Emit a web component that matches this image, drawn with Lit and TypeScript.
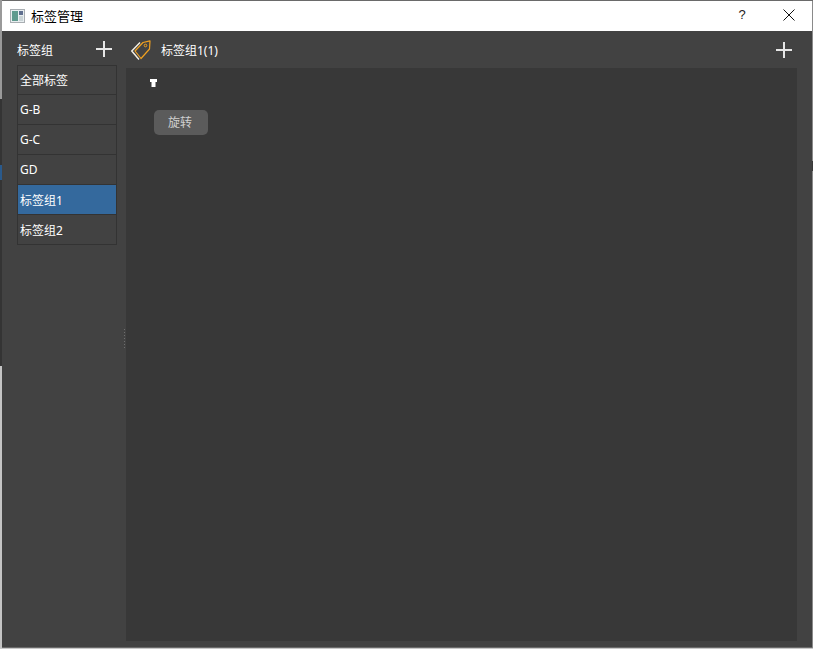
import { LitElement, html, css, svg } from "lit";
import { customElement } from "lit/decorators.js";

const plus = svg`<svg class="plus" width="16" height="16" viewBox="0 0 16 16"><path d="M8 0V16M0 8H16" stroke="#e6e6e6" stroke-width="2" fill="none"/></svg>`;

@customElement("app-root")
export class AppRoot extends LitElement {
  static styles = css`
    :host { display: block; width: 813px; height: 649px; overflow: hidden; box-sizing: border-box;
      background: #c8c8c8; font-family: "Noto Sans", "Noto Sans CJK SC", "Liberation Sans", sans-serif; }
    .frame { box-sizing: border-box; width: 813px; height: 648px; display: flex; background: #6a6a6a; padding-top: 1px; }
    .edge-l { width: 2px; flex: none; margin-top: -1px;
      background: linear-gradient(#9a9a9a 0 99px, #343434 99px 165px, #2a5a8c 165px 180px, #343434 180px 366px, #c4c4c4 366px); }
    .edge-r { width: 1px; flex: none; background: linear-gradient(#8a8a8a 0 160px, #3a3a3a 160px 170px, #8a8a8a 170px); }
    .win { flex: 1; min-width: 0; display: flex; flex-direction: column; padding-bottom: 1px; }
    .title { height: 30px; flex: none; background: #fff; display: flex; align-items: center; padding-left: 8px; color: #000; font-size: 13px; }
    .app-icon { margin-right: 6px; }
    .title-text { flex: 1; position: relative; top: -1px; }
    .help { width: 44px; text-align: center; font-size: 13px; font-family: "Liberation Sans", sans-serif; color: #222; position: relative; left: -4px; top: -2px; }
    .close { width: 44px; display: flex; justify-content: center; position: relative; left: -1px; top: -1px; }
    .body { flex: 1; min-height: 0; background: #424242; display: flex; color: #fff; font-size: 12px; }
    .side { width: 124px; flex: none; padding-left: 15px; box-sizing: border-box; }
    .side-head { height: 34px; padding-top: 2px; display: flex; align-items: center; justify-content: space-between; width: 95px; box-sizing: border-box; }
    .side-head span { padding-top: 2px; }
    .list { width: 100px; box-sizing: border-box; border: 1px solid #333; }
    .row { height: 30px; box-sizing: border-box; border-bottom: 1px solid #333; padding-left: 2px; display: flex; align-items: center; white-space: nowrap; line-height: 16px; }
    .row.cjk { padding-top: 2px; }
    .row:first-child { height: 29px; }
    .row:last-child { border-bottom: 0; height: 29px; }
    .row.sel { background: #34699d; }
    .main { flex: 1; min-width: 0; display: flex; flex-direction: column; padding: 0 15px 6px 0; }
    .main-head { height: 37px; flex: none; display: flex; align-items: center; padding: 0 5px; }
    .main-head .name { flex: 1; margin-left: 10px; }
    .panel { flex: 1; background: #383838; padding: 11px 0 0 24px; box-sizing: border-box; }
    .marker { display: block; }
    .rotate { margin: 23px 0 0 4px; width: 54px; height: 25px; box-sizing: border-box; padding: 0 2px 2px 0; border-radius: 5px; background: #5b5b5b; color: #d0d0d0; font-size: 12px; display: flex; align-items: center; justify-content: center; }
    .grip { position: absolute; left: 124px; top: 329px; width: 1px; height: 21px; background: repeating-linear-gradient(#6e6e6e 0 1px, transparent 1px 3px); }
  `;

  render() {
    const rows = [
      { label: "全部标签", cjk: true },
      { label: "G-B", cjk: false },
      { label: "G-C", cjk: false },
      { label: "GD", cjk: false },
      { label: "标签组1", cjk: true },
      { label: "标签组2", cjk: true },
    ];
    return html`
      <div class="frame">
        <div class="edge-l"></div>
        <div class="win">
          <div class="title">
            <svg class="app-icon" width="15" height="14" viewBox="0 0 15 14">
              <rect x="0.5" y="0.5" width="14" height="13" fill="#e8eef0" stroke="#a9aeb2"/>
              <rect x="2" y="2" width="6" height="10" fill="#5f9a8e"/>
              <rect x="9" y="2" width="4" height="4" fill="#5f6f8f"/>
              <rect x="9" y="7" width="4" height="5" fill="#c9d3d6"/>
            </svg>
            <span class="title-text">标签管理</span>
            <span class="help">?</span>
            <span class="close"><svg width="12" height="12" viewBox="0 0 12 12"><path d="M0.5 0.5L11.5 11.5M11.5 0.5L0.5 11.5" stroke="#111" stroke-width="1" fill="none"/></svg></span>
          </div>
          <div class="body">
            <div class="side">
              <div class="side-head"><span>标签组</span>${plus}</div>
              <div class="list">
                ${rows.map((r, i) => html`<div class="row ${i === 4 ? "sel" : ""} ${r.cjk ? "cjk" : ""}"><span>${r.label}</span></div>`)}
              </div>
            </div>
            <div class="main">
              <div class="main-head">
                <svg width="20" height="20" viewBox="0 0 20 20">
                  <path d="M9 2.5L0.8 11L8 19.5" stroke="#f4efe4" stroke-width="1.4" fill="none"/>
                  <path d="M4 11L12 2.5L19 0.8L18.5 9L10 18.5Z" fill="none" stroke="#f0a020" stroke-width="1.2" stroke-linejoin="round"/>
                  <circle cx="14.5" cy="5.5" r="1.3" fill="none" stroke="#f0a020"/>
                </svg>
                <span class="name">标签组1(1)</span>
                ${plus}
              </div>
              <div class="panel">
                <svg class="marker" width="7" height="8" viewBox="0 0 7 8"><path d="M0 0H7V3H5.5V8H1.5V3H0Z" fill="#fff"/></svg>
                <div class="rotate">旋转</div>
              </div>
            </div>
          </div>
        </div>
        <div class="edge-r"></div>
      </div>
      <div class="grip"></div>
    `;
  }
}
